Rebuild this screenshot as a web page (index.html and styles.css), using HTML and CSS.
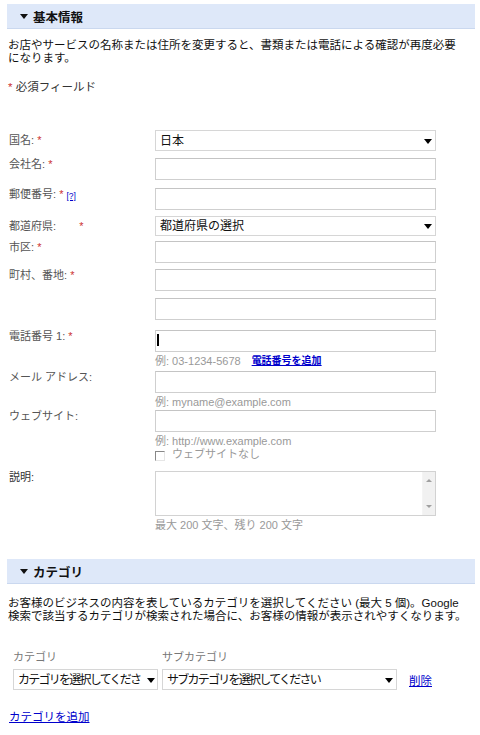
FILE: index.html
```html
<!DOCTYPE html>
<html lang="ja">
<head>
<meta charset="utf-8">
<title>ビジネス情報</title>
<link rel="stylesheet" href="styles.css">
</head>
<body>
<div class="page">
  <div class="section-head"><span class="tri"></span>基本情報</div>
  <p class="intro intro1">お店やサービスの名称または住所を変更すると、書類または電話による確認が再度必要になります。</p>
  <p class="req-note"><span class="req">*</span> 必須フィールド</p>

  <div class="form">
    <div class="row row-sel">
      <label class="lbl">国名: <span class="req">*</span></label>
      <div class="field"><div class="sel-wrap"><select class="sel"><option>日本</option></select></div></div>
    </div>
    <div class="row g7">
      <label class="lbl">会社名: <span class="req">*</span></label>
      <div class="field"><input class="txt" type="text"></div>
    </div>
    <div class="row g8">
      <label class="lbl">郵便番号: <span class="req">*</span> <a class="help" href="#">[?]</a></label>
      <div class="field"><input class="txt" type="text"></div>
    </div>
    <div class="row row-sel g6">
      <label class="lbl">都道府県: <span class="req req-far">*</span></label>
      <div class="field"><div class="sel-wrap"><select class="sel sel-short"><option>都道府県の選択</option></select></div></div>
    </div>
    <div class="row g5">
      <label class="lbl">市区: <span class="req">*</span></label>
      <div class="field"><input class="txt" type="text"></div>
    </div>
    <div class="row g6">
      <label class="lbl">町村、番地: <span class="req">*</span></label>
      <div class="field"><input class="txt" type="text"></div>
    </div>
    <div class="row g7">
      <span class="lbl"></span>
      <div class="field"><input class="txt" type="text"></div>
    </div>
    <div class="row g10">
      <label class="lbl">電話番号 1: <span class="req">*</span></label>
      <div class="field">
        <div class="caret-wrap"><input class="txt" type="text"><span class="caret"></span></div>
        <div class="hint">例: 03-1234-5678<a class="add-link" href="#">電話番号を追加</a></div>
      </div>
    </div>
    <div class="row g4">
      <label class="lbl">メール アドレス:</label>
      <div class="field">
        <input class="txt" type="text">
        <div class="hint">例: myname@example.com</div>
      </div>
    </div>
    <div class="row g2">
      <label class="lbl">ウェブサイト:</label>
      <div class="field">
        <input class="txt" type="text">
        <div class="hint">例: http://www.example.com</div>
        <label class="check"><input type="checkbox" class="cb"><span>ウェブサイトなし</span></label>
      </div>
    </div>
    <div class="row g10">
      <label class="lbl lbl-dark">説明:</label>
      <div class="field">
        <div class="ta-wrap">
          <textarea class="ta"></textarea>
          <div class="scroll"><span class="up"></span><span class="down"></span></div>
        </div>
        <div class="hint">最大 200 文字、残り 200 文字</div>
      </div>
    </div>
  </div>

  <div class="section-head head2"><span class="tri"></span>カテゴリ</div>
  <p class="intro intro2">お客様のビジネスの内容を表しているカテゴリを選択してください (最大 5 個)。Google<br>検索で該当するカテゴリが検索された場合に、お客様の情報が表示されやすくなります。</p>

  <div class="cat">
    <div class="cat-lbl">カテゴリ</div>
    <div class="cat-lbl">サブカテゴリ</div>
    <div></div>
    <div class="sel-wrap sel-wrap-cat1"><select class="sel sel-cat sel-cat1"><option>カテゴリを選択してください</option></select></div>
    <div class="sel-wrap"><select class="sel sel-cat"><option>サブカテゴリを選択してください</option></select></div>
    <a class="del" href="#">削除</a>
  </div>
  <a class="add-cat" href="#">カテゴリを追加</a>
</div>
</body>
</html>
```
FILE: styles.css
```css
* { box-sizing: border-box; }
body {
  margin: 0;
  background: #fff;
  color: #222;
  font-family: "Liberation Sans", "Noto Sans CJK JP", sans-serif;
}
a { color: #00c; }
.page {
  width: 468px;
  margin-left: 7px;
  padding-top: 4px;
}
.section-head {
  height: 25px;
  background: #dee8f9;
  border-bottom: 1px solid #cad8ef;
  display: flex;
  align-items: center;
  padding-left: 13px;
  font-weight: bold;
  font-size: 12.5px;
  color: #111;
}
.tri {
  width: 0;
  height: 0;
  border-left: 4px solid transparent;
  border-right: 4px solid transparent;
  border-top: 5px solid #111;
  margin-right: 5px;
}
.intro {
  margin: 10px 0 0 1px;
  font-size: 11.5px;
  line-height: 13px;
  color: #111;
}
.intro1 { width: 456px; }
.req-note {
  margin: 16px 0 0 1px;
  font-size: 11.5px;
  line-height: 13px;
  color: #333;
}
.req { color: #c33; }
.form {
  margin-top: 36px;
  padding-left: 2px;
}
.row {
  display: grid;
  grid-template-columns: 146px 281px;
  align-items: start;
}
.row.g2 { margin-top: 2px; }
.row.g4 { margin-top: 4px; }
.row.g5 { margin-top: 5px; }
.row.g6 { margin-top: 6px; }
.row.g7 { margin-top: 7px; }
.row.g8 { margin-top: 8px; }
.row.g10 { margin-top: 10px; }
.lbl {
  font-size: 11px;
  line-height: 12px;
  color: #555;
}
.lbl-dark { color: #333; }
.row-sel .lbl { padding-top: 4px; }
.req-far { margin-left: 20px; }
.help {
  font-size: 8.5px;
  vertical-align: -1px;
}
.txt {
  display: block;
  width: 281px;
  height: 22px;
  margin: 0;
  border: 1px solid #cfcfcf;
  border-top-color: #c4c4c4;
  padding: 2px 4px;
  font: inherit;
  font-size: 12px;
  background: #fff;
  outline: none;
}
.sel-wrap { position: relative; }
.sel-wrap::after {
  content: "";
  position: absolute;
  right: 4px;
  top: 50%;
  margin-top: -2px;
  border-left: 4px solid transparent;
  border-right: 4px solid transparent;
  border-top: 5px solid #000;
  pointer-events: none;
}
.sel-wrap-cat1::after { right: 3px; }
.sel {
  display: block;
  width: 100%;
  height: 21px;
  margin: 0;
  appearance: none;
  -webkit-appearance: none;
  border: 1px solid #d6d6d6;
  border-radius: 0;
  background: #fff;
  padding: 0 20px 0 4px;
  font-family: "Liberation Sans", "Noto Sans CJK JP", sans-serif;
  font-size: 12px;
  color: #111;
  outline: none;
}
.sel-short { height: 20px; }
.sel-cat { letter-spacing: -1.75px; }
.sel-cat1 { padding-right: 16px; }
.caret-wrap { position: relative; }
.caret {
  position: absolute;
  left: 2px;
  top: 4px;
  width: 2px;
  height: 12px;
  background: #000;
}
.hint {
  display: flex;
  align-items: center;
  height: 12px;
  font-size: 11px;
  line-height: 12px;
  color: #999;
  margin-top: 3px;
}
.add-link {
  margin-left: 11px;
  color: #00c;
  font-weight: bold;
  font-size: 10px;
}
.check {
  display: flex;
  align-items: center;
  height: 13px;
  margin-top: 1px;
  font-size: 11px;
  line-height: 13px;
  color: #999;
}
.cb {
  appearance: none;
  -webkit-appearance: none;
  width: 10px;
  height: 10px;
  margin: 3px 7px 0 0;
  border: 1px solid #e6e6e6;
  border-top-color: #888;
  border-left-color: #888;
  background: #fff;
}
.ta-wrap {
  display: flex;
  height: 45px;
  border: 1px solid #d2d2d2;
  background: #fff;
}
.ta {
  flex: 1;
  border: 0;
  resize: none;
  outline: none;
  padding: 2px 4px;
  font: inherit;
  font-size: 12px;
}
.scroll {
  width: 13px;
  background: #f1f1f1;
  border-left: 1px solid #f4f4f4;
  display: flex;
  flex-direction: column;
  justify-content: space-between;
  align-items: center;
  padding: 7px 0 7px;
}
.up, .down {
  width: 0;
  height: 0;
  border-left: 3px solid transparent;
  border-right: 3px solid transparent;
}
.up { border-bottom: 3px solid #a0a0a0; }
.down { border-top: 3px solid #a0a0a0; }
.head2 { margin-top: 28px; }
.intro2 { margin-top: 13px; white-space: nowrap; }
.cat {
  margin-top: 28px;
  margin-left: 6px;
  display: grid;
  grid-template-columns: 145px 235px auto;
  column-gap: 4px;
  row-gap: 6px;
  align-items: center;
}
.cat-lbl {
  font-size: 11px;
  line-height: 12px;
  color: #777;
}
.del {
  margin-left: 8px;
  font-size: 11.5px;
}
.add-cat {
  display: inline-block;
  margin: 21px 0 0 2px;
  font-size: 11.5px;
  line-height: 13px;
}
```
